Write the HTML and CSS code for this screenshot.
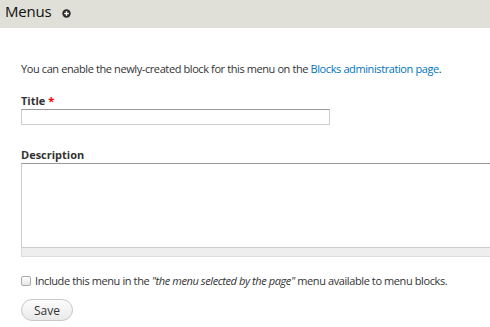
FILE: index.html
```html
<!DOCTYPE html>
<html lang="en">
<head>
    <meta charset="UTF-8">
    <title>Menus</title>
    <link rel="stylesheet" href="styles.css">
</head>
<body>
    <div class="page-header">
        <h1 class="page-title">Menus</h1>
        <a class="add-link" href="#" title="Add to shortcuts">
            <svg width="9" height="9" viewBox="0 0 9 9">
                <circle cx="4.5" cy="4.5" r="4.2" fill="#2b2b2b"/>
                <rect x="2.2" y="3.8" width="4.6" height="1.4" fill="#fff"/>
                <rect x="3.8" y="2.2" width="1.4" height="4.6" fill="#fff"/>
            </svg>
        </a>
    </div>

    <div class="content">
        <form>
            <p class="help">You can enable the newly-created block for this menu on the <a href="#">Blocks administration page</a>.</p>

            <div class="form-item form-title">
                <label for="title">Title <span class="required">*</span></label>
                <input type="text" id="title" class="form-text">
            </div>

            <div class="form-item form-description">
                <label for="description">Description</label>
                <div class="resizable">
                    <textarea id="description"></textarea>
                    <div class="grippie"></div>
                </div>
            </div>

            <div class="form-item form-checkbox">
                <input type="checkbox" id="menu-selected">
                <label for="menu-selected">Include this menu in the <em>"the menu selected by the page"</em> menu available to menu blocks.</label>
            </div>

            <button type="button" class="button">Save</button>
        </form>
    </div>
</body>
</html>
```

FILE: styles.css
```css
/* page base */
body {
    margin: 0;
    font-family: "Open Sans", "DejaVu Sans", sans-serif;
    font-size: 11px;
    line-height: 15px;
    letter-spacing: -0.4px;
    color: #333;
    background: #fff;
    overflow: hidden;
}

/* grey title bar */
.page-header {
    height: 28px;
    box-sizing: border-box;
    padding: 1px 0 0 5px;
    background: #e0e0d8;
    display: flex;
    align-items: flex-start;
}
.page-title {
    margin: 0;
    font-size: 15px;
    line-height: 20px;
    font-weight: normal;
    letter-spacing: -0.2px;
    color: #111;
}
.add-link { display: block; margin: 8px 0 0 11px; line-height: 0; }

/* form area */
.content { padding: 33px 0 0 21px; }
.help { margin: 0 0 17px; white-space: nowrap; }
a { color: #0074bd; text-decoration: none; }

.form-item label {
    display: block;
    font-weight: bold;
    letter-spacing: 0;
    margin-bottom: 1px;
}
.required { color: #e00; }

.form-title { margin-bottom: 22px; }
.form-text {
    display: block;
    width: 309px;
    height: 16px;
    box-sizing: border-box;
    margin: 0;
    padding: 0 3px;
    border: 1px solid #ccc;
    border-top-color: #999;
    font: inherit;
}

.form-description { margin-bottom: 16px; }
.resizable { width: 520px; }
.resizable textarea {
    display: block;
    width: 100%;
    height: 85px;
    box-sizing: border-box;
    margin: 0;
    border: 1px solid #ccc;
    border-top-color: #999;
    resize: none;
    font: inherit;
}
.grippie {
    height: 8px;
    background: #eee;
    border: 1px solid #ddd;
    border-top: 0;
}

.form-checkbox {
    display: flex;
    align-items: center;
    gap: 4px;
    margin-bottom: 11px;
}
.form-checkbox input {
    appearance: none;
    width: 10px;
    height: 10px;
    margin: 0;
    border: 1px solid #aaa;
    border-radius: 2px;
    background: linear-gradient(#fff, #e6e6e6);
}
.form-checkbox label {
    font-weight: normal;
    letter-spacing: -0.4px;
    margin: 0;
    white-space: nowrap;
}

.button {
    width: 52px;
    height: 22px;
    padding: 0;
    border: 1px solid #c8c8c8;
    border-radius: 12px;
    background: linear-gradient(#fdfdfd, #e9e9e9);
    font: inherit;
    font-size: 12px;
    letter-spacing: 0;
    color: #333;
}
```
